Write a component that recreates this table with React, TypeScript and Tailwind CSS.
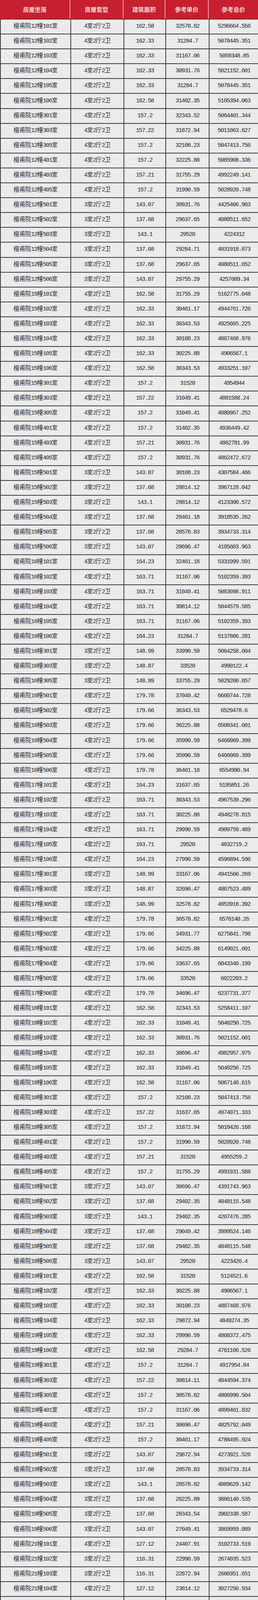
import React from "react";

const RAW = `12幢101室,4,162.58,32578.82,5296664.556
12幢102室,4,162.33,31284.7,5078445.351
12幢103室,4,162.33,31167.06,5059348.85
12幢104室,4,162.33,30931.76,5021152.601
12幢105室,4,162.33,31284.7,5078445.351
12幢106室,4,162.58,31402.35,5105394.063
12幢301室,4,157.2,32343.52,5084401.344
12幢303室,4,157.22,31872.94,5011063.627
12幢305室,4,157.2,32108.23,5047413.756
12幢401室,4,157.2,32225.88,5065908.336
12幢403室,4,157.21,31755.29,4992249.141
12幢405室,4,157.2,31990.59,5028920.748
12幢501室,3,143.07,30931.76,4425406.903
12幢502室,3,137.68,29637.65,4080511.652
12幢503室,3,143.1,29520,4224312
12幢504室,3,137.68,29284.71,4031918.873
12幢505室,3,137.68,29637.65,4080511.652
12幢506室,3,143.07,29755.29,4257089.34
15幢101室,4,162.58,31755.29,5162775.048
15幢102室,4,162.33,30461.17,4944761.726
15幢103室,4,162.33,30343.53,4925665.225
15幢104室,4,162.33,30108.23,4887468.976
15幢105室,4,162.33,30225.88,4906567.1
15幢106室,4,162.58,30343.53,4933251.107
15幢301室,4,157.2,31520,4954944
15幢303室,4,157.22,31049.41,4881588.24
15幢305室,4,157.2,31049.41,4880967.252
15幢401室,4,157.2,31402.35,4936449.42
15幢403室,4,157.21,30931.76,4862781.99
15幢405室,4,157.2,30931.76,4862472.672
15幢501室,3,143.07,30108.23,4307584.466
15幢502室,3,137.68,28814.12,3967128.042
15幢503室,3,143.1,28814.12,4123300.572
15幢504室,3,137.68,28461.18,3918535.262
15幢505室,3,137.68,28578.83,3934733.314
15幢506室,3,143.07,28696.47,4105603.963
16幢101室,4,164.23,32461.18,5331099.591
16幢102室,4,163.71,31167.06,5102359.393
16幢103室,4,163.71,31049.41,5083098.911
16幢104室,4,163.71,30814.12,5044579.585
16幢105室,4,163.71,31167.06,5102359.393
16幢106室,4,164.23,31284.7,5137886.281
16幢301室,3,148.99,33990.59,5064258.004
16幢303室,3,148.87,33520,4990122.4
16幢305室,3,148.99,33755.29,5029200.657
16幢501室,4,179.78,37049.42,6660744.728
16幢502室,4,179.66,36343.53,6529478.6
16幢503室,4,179.66,36225.88,6508341.601
16幢504室,4,179.66,35990.59,6466069.399
16幢505室,4,179.66,35990.59,6466069.399
16幢506室,4,179.78,36461.18,6554990.94
17幢101室,4,164.23,31637.65,5195851.26
17幢102室,4,163.71,30343.53,4967539.296
17幢103室,4,163.71,30225.88,4948278.815
17幢104室,4,163.71,29990.59,4909759.489
17幢105室,4,163.71,29520,4832719.2
17幢106室,4,164.23,27990.59,4596894.596
17幢301室,3,148.99,33167.06,4941560.269
17幢303室,3,148.87,32696.47,4867523.489
17幢305室,3,148.99,32578.82,4853918.392
17幢501室,4,179.78,36578.82,6576140.26
17幢502室,4,179.66,34931.77,6275841.798
17幢503室,4,179.66,34225.88,6149021.601
17幢504室,4,179.66,33637.65,6043340.199
17幢505室,4,179.66,33520,6022203.2
17幢506室,4,179.78,34696.47,6237731.377
18幢101室,4,162.58,32343.53,5258411.107
18幢102室,4,162.33,31049.41,5040250.725
18幢103室,4,162.33,30931.76,5021152.601
18幢104室,4,162.33,30696.47,4982957.975
18幢105室,4,162.33,31049.41,5040250.725
18幢106室,4,162.58,31167.06,5067140.615
18幢301室,4,157.2,32108.23,5047413.756
18幢303室,4,157.22,31637.65,4974071.333
18幢305室,4,157.2,31872.94,5010426.168
18幢401室,4,157.2,31990.59,5028920.748
18幢403室,4,157.21,31520,4955259.2
18幢405室,4,157.2,31755.29,4991931.588
18幢501室,3,143.07,30696.47,4391743.963
18幢502室,3,137.68,29402.35,4048115.548
18幢503室,3,143.1,29402.35,4207476.285
18幢504室,3,137.68,29049.42,3999524.146
18幢505室,3,137.68,29402.35,4048115.548
18幢506室,3,143.07,29520,4223426.4
19幢101室,4,162.58,31520,5124521.6
19幢102室,4,162.33,30225.88,4906567.1
19幢103室,4,162.33,30108.23,4887468.976
19幢104室,4,162.33,29872.94,4849274.35
19幢105室,4,162.33,29990.59,4868372.475
19幢106室,4,162.58,29284.7,4761106.526
19幢301室,4,157.2,31284.7,4917954.84
19幢303室,4,157.22,30814.11,4844594.374
19幢305室,4,157.2,30578.82,4806990.504
19幢401室,4,157.2,31167.06,4899461.832
19幢403室,4,157.21,30696.47,4825792.049
19幢405室,4,157.2,30461.17,4788495.924
19幢501室,3,143.07,29872.94,4273921.526
19幢502室,3,137.68,28578.83,3934733.314
19幢503室,3,143.1,28578.82,4089629.142
19幢504室,3,137.68,28225.89,3886140.535
19幢505室,3,137.68,28343.54,3902338.587
19幢506室,3,143.07,27049.41,3869959.089
21幢101室,4,127.12,24407.91,3102733.519
21幢102室,3,116.31,22990.59,2674035.523
21幢103室,3,116.31,22872.94,2660351.651
21幢104室,4,127.12,23814.12,3027250.934
21幢201室,4,127.12,25578.82,3251579.598
21幢202室,3,116.31,24167.06,2810870.749
21幢203室,3,116.31,24049.41,2797186.877
21幢204室,4,127.12,24990.59,3176803.801
21幢301室,4,127.12,26755.29,3401132.465
21幢302室,3,116.31,25343.53,2947705.974
21幢303室,3,116.31,25225.88,2934022.103
21幢304室,4,127.12,26167.06,3326356.667
21幢401室,4,127.12,27343.53,3475909.534
21幢402室,3,116.31,25931.77,3016124.169
21幢403室,3,116.31,25814.12,3002440.297
21幢404室,4,127.12,26755.29,3401132.465
21幢501室,4,127.12,27931.77,3550686.602
21幢502室,3,116.31,26520,3084541.2
21幢503室,3,116.31,26402.36,3070858.492
21幢504室,4,127.12,27343.53,3475909.534
21幢601室,4,127.12,25578.82,3251579.598
21幢602室,3,116.31,24167.06,2810870.749
21幢603室,3,116.31,24049.41,2797186.877
21幢604室,4,127.12,24990.59,3176803.801
22幢101室,3,117.44,23225.88,2727647.347
22幢102室,3,117.44,21461.17,2520399.805
22幢201室,3,117.44,24402.35,2865811.984
22幢202室,3,117.44,23814.11,2796729.078
22幢301室,3,117.44,25578.82,3003976.621
22幢302室,3,117.44,24990.58,2934893.715
22幢401室,3,117.44,26167.06,3073059.526
22幢402室,3,117.44,25578.82,3003976.621
22幢501室,3,117.44,26755.29,3142141.258
22幢502室,3,117.44,26167.06,3073059.526
22幢601室,3,117.44,24402.35,2865811.984
22幢602室,3,117.44,23814.11,2796729.078
25幢101室,4,117.08,22049.41,2581544.923
25幢102室,3,106.14,20637.65,2190480.171
25幢103室,3,106.14,20637.65,2190480.171
25幢104室,4,117.08,21461.17,2512673.784
25幢201室,4,128.03,24990.59,3199545.238
25幢202室,3,117.14,23578.83,2762024.146
25幢203室,3,117.14,23578.83,2762024.146
25幢204室,4,128.03,24402.35,3124232.871
25幢301室,4,128.03,26167.06,3350168.692
25幢302室,3,117.14,24755.29,2899834.671
25幢303室,3,117.14,24755.29,2899834.671
25幢304室,4,128.03,25578.82,3274856.325
25幢401室,4,128.03,26755.29,3425479.779
25幢402室,3,117.14,25343.53,2968741.104
25幢403室,3,117.14,25343.53,2968741.104
25幢404室,4,128.03,26167.06,3350168.692
25幢501室,4,128.03,27343.53,3500792.146
25幢502室,3,117.14,25931.77,3037647.538
25幢503室,3,117.14,25931.77,3037647.538
25幢504室,4,128.03,26755.29,3425479.779
25幢601室,4,128.03,24990.59,3199545.238
25幢602室,3,117.14,23578.83,2762024.146
25幢603室,3,117.14,23578.83,2762024.146
25幢604室,4,128.03,24402.35,3124232.871
26幢101室,4,117.49,21814.12,2562940.959
26幢102室,3,106.51,20402.35,2173054.299
26幢103室,3,106.51,20284.71,2160524.462
26幢104室,3,106.51,19108.23,2035217.577
26幢201室,4,128.48,24755.29,3180559.659
26幢202室,3,117.55,23343.53,2744031.952
26幢203室,3,117.55,23225.88,2730202.194
26幢204室,3,117.55,23225.88,2730202.194
26幢301室,4,128.48,25931.76,3331712.525
26幢302室,3,117.55,24520,2882326
26幢303室,3,117.55,24402.35,2868496.243
26幢304室,3,117.55,24402.35,2868496.243
26幢401室,4,128.48,26520,3407289.6
26幢402室,3,117.55,25108.24,2951473.612
26幢403室,3,117.55,24990.59,2937643.855
26幢404室,3,117.55,24990.59,2937643.855
26幢501室,4,128.48,27108.24,3482866.675
26幢502室,3,117.55,25696.47,3020620.049
26幢503室,3,117.55,25578.83,3006791.467
26幢504室,3,117.55,25578.83,3006791.467
26幢601室,4,128.48,24755.29,3180559.659
26幢602室,3,117.55,23343.53,2744031.952
26幢603室,3,117.55,23225.88,2730202.194`;

const ROWS = RAW.trim()
  .split("\n")
  .map((l) => l.split(","));

const HEAD = ["房屋坐落", "房屋套型", "建筑面积", "参考单价", "参考总价"];

function Txt({ s }: { s: string }) {
  const parts = s.match(/[0-9.]+|[^0-9.]+/g) || [];
  return (
    <>
      {parts.map((p, i) =>
        /[0-9.]/.test(p[0]) ? (
          <span key={i} className="tracking-[-1.4px]">
            {p}
          </span>
        ) : (
          <span key={i}>{p}</span>
        )
      )}
    </>
  );
}

const GRID = "grid grid-cols-[180px_136px_107px_111px_126px]";
const ROWCLS =
  "h-[38.1px] border-b-2 border-l-2 border-[#3d3d3d] font-['Liberation_Mono','Noto_Sans_CJK_SC',monospace] text-[15px] leading-[20px] text-[#262626]";

function Cells({ r }: { r: string[] }) {
  const cells = ["檀甫院" + r[0], r[1] + "室2厅2卫", r[2], r[3], r[4]];
  return (
    <>
      {cells.map((c, ci) => (
        <div
          key={ci}
          className={`flex items-center justify-center overflow-hidden whitespace-nowrap ${
            ci < 4 ? "border-r-2 border-[#3d3d3d]" : "border-r border-[#3d3d3d]"
          }`}
        >
          <Txt s={c} />
        </div>
      ))}
    </>
  );
}

export default function App() {
  return (
    <div className="flex flex-col w-[660px] h-[7102px] overflow-hidden bg-[#ebebeb]">
      <div
        className={`${GRID} shrink-0 h-[50px] bg-[#c81f2e] border-b-2 border-[#9e1420] font-['Noto_Sans_CJK_SC',sans-serif] font-bold text-[15px] leading-[20px] text-[#f6dcdc]`}
      >
        {HEAD.map((h, i) => (
          <div
            key={i}
            className={`flex items-center justify-center ${
              i < 4 ? "border-r-2 border-[#e7a5ab]" : ""
            }`}
          >
            {h}
          </div>
        ))}
      </div>
      {ROWS.map((r, ri) => (
        <div key={ri} className={`${GRID} shrink-0 ${ROWCLS}`}>
          <Cells r={r} />
        </div>
      ))}
      <div className={`${GRID} flex-1 border-l-2 border-[#3d3d3d]`}>
        <div className="border-r-2 border-[#3d3d3d]" />
        <div className="border-r-2 border-[#3d3d3d]" />
        <div className="border-r-2 border-[#3d3d3d]" />
        <div className="border-r-2 border-[#3d3d3d]" />
        <div className="border-r border-[#3d3d3d]" />
      </div>
    </div>
  );
}
